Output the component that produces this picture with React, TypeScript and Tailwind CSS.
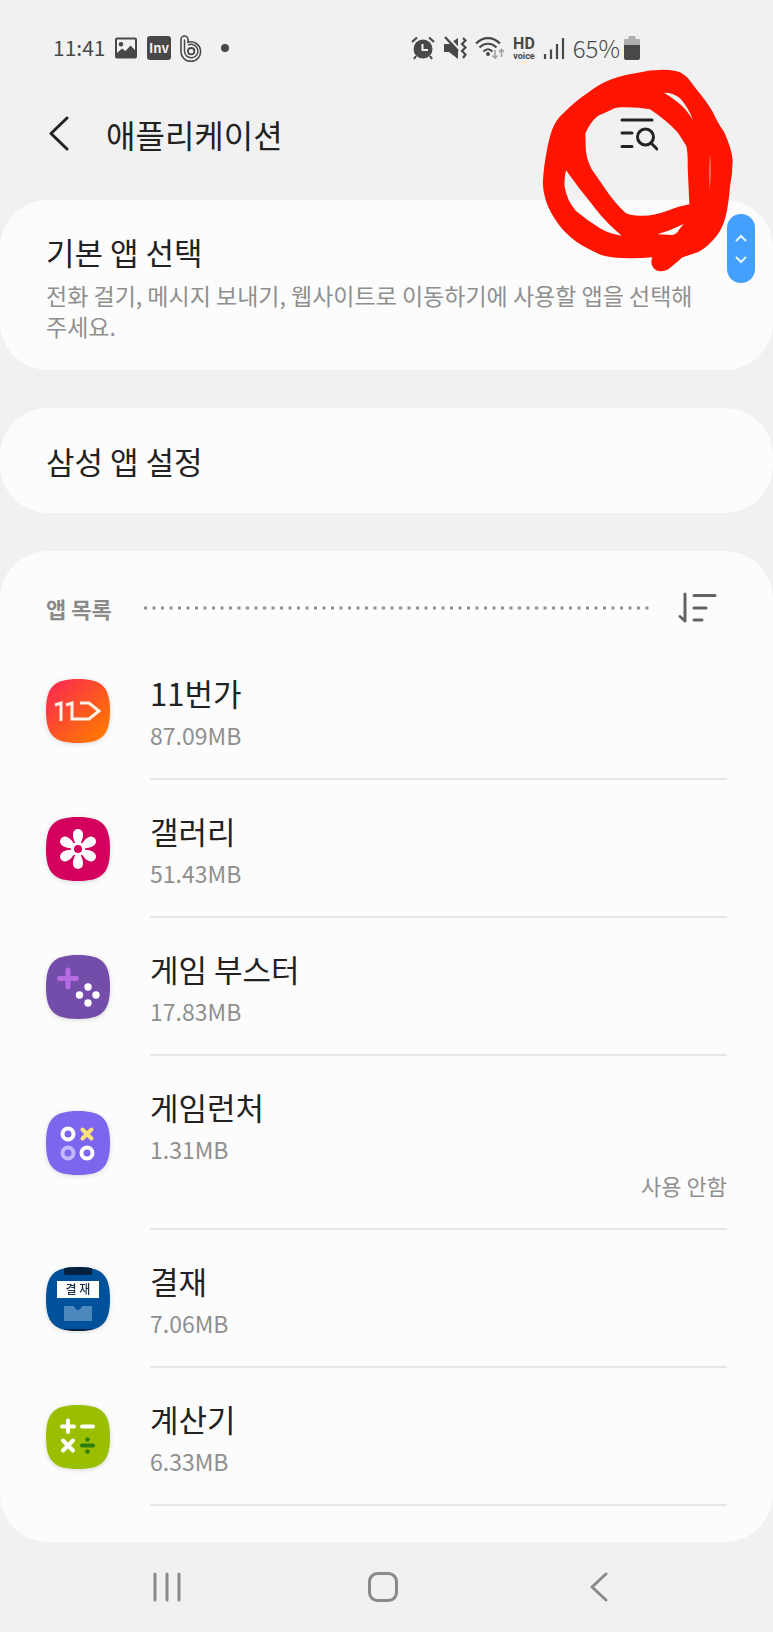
import type { ReactNode } from 'react'

type AppEntry = {
    name: string
    size: string
    icon: ReactNode
    status?: string
}

function Squircle({ fill, children }: { fill: string; children: ReactNode }) {
    return (
        <svg viewBox="0 0 64 64" className="size-16 shrink-0 drop-shadow-sm" aria-hidden="true">
            <defs>
                <linearGradient id="street-gradient" x1="0" y1="0" x2="1" y2="1">
                    <stop offset="0.1" stopColor="#fb2d4c" />
                    <stop offset="0.9" stopColor="#ff7900" />
                </linearGradient>
                <clipPath id="squircle">
                    <path d="M32 0C56 0 64 8 64 32S56 64 32 64 0 56 0 32 8 0 32 0z" />
                </clipPath>
            </defs>
            <g clipPath="url(#squircle)">
                <rect width="64" height="64" fill={fill} />
                {children}
            </g>
        </svg>
    )
}

const apps: AppEntry[] = [
    {
        name: '11번가',
        size: '87.09MB',
        icon: (
            <Squircle fill="url(#street-gradient)">
                <g fill="none" stroke="#fff3ea" strokeWidth="3">
                    <path d="M9 26l6-2v18" />
                    <path d="M20 26l6-2v16h17l10-8-10-8H34" />
                </g>
            </Squircle>
        ),
    },
    {
        name: '갤러리',
        size: '51.43MB',
        icon: (
            <Squircle fill="#d3005d">
                {[0, 60, 120, 180, 240, 300].map((angle) => (
                    <path
                        key={angle}
                        d="M32 32C29 25 26.500 21 27 17a5 5 0 0 1 10 0c.5 4-2 8-5 15z"
                        fill="#fff"
                        transform={`rotate(${angle} 32 32)`}
                    />
                ))}
                <circle cx="32" cy="32" r="7" fill="#fff" />
                <circle cx="32" cy="32" r="4" fill="#d3005d" />
            </Squircle>
        ),
    },
    {
        name: '게임 부스터',
        size: '17.83MB',
        icon: (
            <Squircle fill="#744caa">
                <path d="M22 15v17M13.500 23.500h17" stroke="#b76be3" strokeWidth="5" strokeLinecap="round" />
                <g fill="#fff">
                    <circle cx="42" cy="32" r="3.700" />
                    <circle cx="33.500" cy="40" r="3.700" />
                    <circle cx="50" cy="40" r="3.700" />
                    <circle cx="42" cy="48" r="3.700" />
                </g>
            </Squircle>
        ),
    },
    {
        name: '게임런처',
        size: '1.31MB',
        status: '사용 안함',
        icon: (
            <Squircle fill="#7d65ee">
                <g fill="none" strokeWidth="4">
                    <circle cx="22" cy="23" r="5.500" stroke="#fff" />
                    <circle cx="22" cy="42" r="5.500" stroke="#c3b6fa" />
                    <circle cx="41" cy="42" r="5.500" stroke="#fff" />
                    <path d="M36.500 18.500l9 9M45.500 18.500l-9 9" stroke="#fbe27a" strokeLinecap="round" />
                </g>
            </Squircle>
        ),
    },
    {
        name: '결재',
        size: '7.06MB',
        icon: (
            <Squircle fill="#00519b">
                <path d="M18 0h28v6a2 2 0 0 1-2 2H20a2 2 0 0 1-2-2z" fill="#04203f" />
                <rect x="11" y="14" width="42" height="17" fill="#fff" />
                <text x="32" y="27" textAnchor="middle" fontSize="12" fontWeight="500" fill="#1c3047">
                    결 재
                </text>
                <path d="M18 39h9c2 0 2 4 5 4s3-4 5-4h9v15H18z" fill="#4d88bd" />
                <path d="M18 62h28v2H18z" fill="#04203f" />
            </Squircle>
        ),
    },
    {
        name: '계산기',
        size: '6.33MB',
        icon: (
            <Squircle fill="#99bf00">
                <g stroke="#fff" strokeWidth="4" strokeLinecap="round">
                    <path d="M22 15.500v11.500M16 21.500h12M36 21.500h11M17 35.500l10 10M27 35.500l-10 10" />
                    <path d="M36 40.500h11" stroke="#2f7d11" />
                </g>
                <circle cx="41.500" cy="34.500" r="2.200" fill="#2f7d11" />
                <circle cx="41.500" cy="46.500" r="2.200" fill="#2f7d11" />
            </Squircle>
        ),
    },
]

function StatusBar() {
    return (
        <div className="flex h-24 items-center justify-between pl-[53px] pr-[133px] text-[#484848]">
            <div className="flex items-center gap-[9px]">
                <span className="text-[21px]">11:41</span>
                <svg viewBox="0 0 24 24" className="size-6" aria-hidden="true">
                    <path
                        fill="currentColor"
                        fillRule="evenodd"
                        d="M3 1.500h18a2 2 0 0 1 2 2v17a2 2 0 0 1-2 2H3a2 2 0 0 1-2-2v-17a2 2 0 0 1 2-2zM3 3.500V17l5-4.500 3.500 2.500 5-5.500L21 14V3.500zM7 6a2.300 2.300 0 1 1 0 4.600A2.300 2.300 0 0 1 7 6z"
                    />
                </svg>
                <svg viewBox="0 0 24 24" className="size-6" aria-hidden="true">
                    <rect width="24" height="24" rx="3" fill="currentColor" />
                    <text x="12" y="17" textAnchor="middle" fontSize="13" fontWeight="700" fill="#f1f1f1">
                        Inv
                    </text>
                </svg>
                <svg viewBox="0 0 22 27" className="h-[27px] w-[22px]" fill="none" stroke="currentColor" aria-hidden="true">
                    <path d="M1 16V4.500a3.500 3.500 0 0 1 7 0v2.700A9.800 9.800 0 1 1 1 16z" strokeWidth="1.600" />
                    <path d="M4.500 16V4.500M4.500 16a6.700 6.700 0 1 0 3.500-5.800" strokeWidth="1.500" />
                    <circle cx="11.200" cy="16.200" r="3.200" strokeWidth="1.800" />
                </svg>
                <span className="ml-2.5 size-2 rounded-full bg-[#484848]" />
            </div>
            <div className="flex items-center gap-2">
                <svg viewBox="0 0 24 24" className="size-6" aria-hidden="true">
                    <circle cx="12" cy="13" r="9.500" fill="currentColor" />
                    <path d="M1 6l5-4.500M23 6l-5-4.500M5 20l-2 3M19 20l2 3" stroke="currentColor" strokeWidth="2.200" />
                    <path d="M11.500 8v6H17" stroke="#f1f1f1" strokeWidth="2" fill="none" />
                </svg>
                <svg viewBox="0 0 24 24" className="size-6" aria-hidden="true">
                    <path d="M1 8h5l9-6v21l-9-7H1z" fill="currentColor" />
                    <path d="M4 0l13 14" stroke="#f1f1f1" strokeWidth="2" />
                    <path d="M2 1l13 14" stroke="currentColor" strokeWidth="2.200" />
                    <path d="M20 2l2.500 2.500L19 8l3.500 3.500L19 15l3.500 3.500L20 22" stroke="currentColor" strokeWidth="2.200" fill="none" />
                </svg>
                <svg viewBox="0 0 30 24" className="h-6 w-[30px]" fill="none" stroke="currentColor" aria-hidden="true">
                    <path d="M1 7.500C8 .2 18 .2 25 7.500M4.500 11.500c5-5 12-5 17 0M8.500 15.500c3-3 6-3 9 0" strokeWidth="2.200" />
                    <circle cx="13" cy="18" r="2" fill="currentColor" stroke="none" />
                    <path d="M20 14v8m-2.500-2.500L20 22l2.500-2.500M26.500 21v-7.500m-2.500 2.500l2.500-2.500L29 16" stroke="#a0a0a0" strokeWidth="1.600" />
                </svg>
                <span className="flex flex-col items-center font-[Roboto,sans-serif] font-bold">
                    <span className="text-base leading-4">HD</span>
                    <span className="text-[9px] leading-[9px]">voice</span>
                </span>
                <svg viewBox="0 0 22 24" className="h-6 w-[22px]" stroke="currentColor" strokeWidth="2.200" aria-hidden="true">
                    <path d="M2 18v5M8 13.500V23M14 8v15M20 2v21" />
                </svg>
                <span className="flex items-center gap-1">
                    <span className="text-2xl font-light">65%</span>
                    <svg viewBox="0 0 16 24" className="h-6 w-4" aria-hidden="true">
                        <path d="M4.500 0h7v3H15a1 1 0 0 1 1 1v6H0V4a1 1 0 0 1 1-1h3.500z" fill="#b0b0b0" />
                        <path d="M0 9h16v13a2 2 0 0 1-2 2H2a2 2 0 0 1-2-2z" fill="currentColor" />
                    </svg>
                </span>
            </div>
        </div>
    )
}

// Hand-drawn ring around the search button
function Scribble() {
    return (
        <svg
            viewBox="450 141 588 618"
            className="pointer-events-none absolute right-[37px] top-[67px] h-[206px] w-[196px]"
            aria-hidden="true"
        >
            <path
                fill="#ff1400"
                fillRule="evenodd"
                d="M740 159Q780 149 820 149 852 149 870 157 890 168 900 182L918 206Q950 244 968 275 985 312 1002 335 1025 385 1028 420 1028 460 1020 500 1016 550 1008 585 1000 620 982 645 955 680 925 696L878 712 835 748Q815 758 797 750 778 735 787 712 740 716 700 714 655 712 632 704 590 686 560 666 525 640 505 612 478 575 467 540 457 505 459 480 462 435 469 400 477 355 486 330 497 300 520 280 560 240 592 220 630 190 665 178 705 163 740 159Z
                M690 262Q740 260 780 268 835 305 865 340L889 378Q894 400 893 440L898 553Q860 560 830 573 790 588 755 587 725 588 708 580 680 555 655 520L605 448Q586 410 587 375L586 340Q600 308 623 288 640 280 658 272 672 263 690 262Z
                M528 451L570 508Q600 545 615 565 650 610 695 647 660 643 630 625 590 600 558 573 530 540 524 500 522 475 528 451Z
                M881 612L868 628Q860 644 846 645L803 643Q845 630 881 612Z
                M822 218Q850 217 870 235 895 262 909 300 885 262 862 246 840 228 822 218Z"
            />
            <path d="M960 400Q967 455 958 512 954 455 960 400Z" fill="#ff6a60" />
        </svg>
    )
}

export default function App() {
    return (
        <div className="relative min-h-screen bg-[#f1f1f1] font-['Noto_Sans_CJK_KR',sans-serif] text-[#222222]">
            <StatusBar />

            <header className="mb-6 flex h-20 items-center pl-[46px] pr-[115px]">
                <button aria-label="뒤로" className="shrink-0">
                    <svg viewBox="0 0 24 40" className="h-10 w-6" fill="none" stroke="currentColor" strokeWidth="3" strokeLinecap="round" strokeLinejoin="round" aria-hidden="true">
                        <path d="M21 2L5 17.500 21 33" />
                    </svg>
                </button>
                <h1 className="ml-9 flex-1 pb-1 text-[32px] leading-10">애플리케이션</h1>
                <button aria-label="검색">
                    <svg viewBox="0 0 38 36" className="h-9 w-[38px]" fill="none" stroke="currentColor" strokeWidth="3" strokeLinecap="round" aria-hidden="true">
                        <path d="M2 2h30M2 15h10M2 28.500h10M31 25l6 6" />
                        <circle cx="25.500" cy="19" r="8" />
                    </svg>
                </button>
            </header>

            <main className="flex flex-col gap-[38px]">
                <button className="block w-full rounded-[48px] bg-[#fcfcfc] px-[46px] pb-7 pt-8 text-left">
                    <span className="block text-[31px] leading-10">기본 앱 선택</span>
                    <span className="mt-2 block break-keep text-[23px] leading-[31px] text-[#8f8f8f]">
                        전화 걸기, 메시지 보내기, 웹사이트로 이동하기에 사용할 앱을 선택해 주세요.
                    </span>
                </button>

                <button className="block w-full rounded-[48px] bg-[#fcfcfc] px-[46px] pb-8 pt-[33px] text-left text-[31px] leading-10">
                    삼성 앱 설정
                </button>

                <section className="rounded-[48px] bg-[#fcfcfc] px-[46px] pb-9 pt-[39px]">
                    <div className="flex h-9 items-center pr-2.5">
                        <h2 className="text-[22px] font-bold leading-8 text-[#8a8a8a]">앱 목록</h2>
                        <svg className="ml-8 mr-6 h-1 min-w-0 flex-1" aria-hidden="true">
                            <line x1="0" y1="2" x2="100%" y2="2" stroke="#8f8f8f" strokeWidth="3" strokeDasharray="3 5.500" />
                        </svg>
                        <button aria-label="정렬" className="text-[#636363]">
                            <svg viewBox="0 0 40 36" className="h-9 w-10" fill="none" stroke="currentColor" strokeWidth="3" strokeLinecap="round" strokeLinejoin="round" aria-hidden="true">
                                <path d="M8 4v27l-5-4.500M17 5.500h21M17 18h12M17 30h8" />
                            </svg>
                        </button>
                    </div>

                    <ul className="pt-4">
                        {apps.map((app) => (
                            <li key={app.name}>
                                <button className="flex w-full items-center gap-10 text-left">
                                    {app.icon}
                                    <span className="block flex-1 border-b-2 border-[#e6e6e6] pb-[27px] pt-[31px]">
                                        <span className="block text-[31px] leading-10">{app.name}</span>
                                        <span className="mt-1.5 block text-[23px] leading-8 text-[#8f8f8f]">
                                            {app.size}
                                        </span>
                                        {app.status && (
                                            <span className="mt-1 block text-right text-[22px] leading-8 text-[#8f8f8f]">
                                                {app.status}
                                            </span>
                                        )}
                                    </span>
                                </button>
                            </li>
                        ))}
                    </ul>
                </section>
            </main>

            <nav className="grid h-[90px] grid-cols-3 place-items-center pl-[59px] pr-[66px] text-[#8a8a8a]">
                <button aria-label="최근 앱">
                    <svg viewBox="0 0 32 32" className="size-8" stroke="currentColor" strokeWidth="3" strokeLinecap="round" aria-hidden="true">
                        <path d="M4 3v26M16 3v26M28 3v26" />
                    </svg>
                </button>
                <button aria-label="홈">
                    <svg viewBox="0 0 32 32" className="size-8" fill="none" stroke="currentColor" strokeWidth="3" aria-hidden="true">
                        <rect x="2.500" y="2.500" width="27" height="27" rx="8" />
                    </svg>
                </button>
                <button aria-label="이전">
                    <svg viewBox="0 0 32 32" className="size-8" fill="none" stroke="currentColor" strokeWidth="3" strokeLinecap="round" strokeLinejoin="round" aria-hidden="true">
                        <path d="M23 3L9 16l14 13" />
                    </svg>
                </button>
            </nav>

            <Scribble />

            <div className="absolute right-[18px] top-[214px] flex h-[69px] w-7 flex-col items-center justify-center rounded-full bg-[#429ffb]">
                <svg viewBox="0 0 14 36" className="h-9 w-3.5" fill="none" stroke="#e4f8ff" strokeWidth="2" aria-hidden="true">
                    <path d="M2 10l5-5 5 5M2 26l5 5 5-5" />
                </svg>
            </div>
        </div>
    )
}
